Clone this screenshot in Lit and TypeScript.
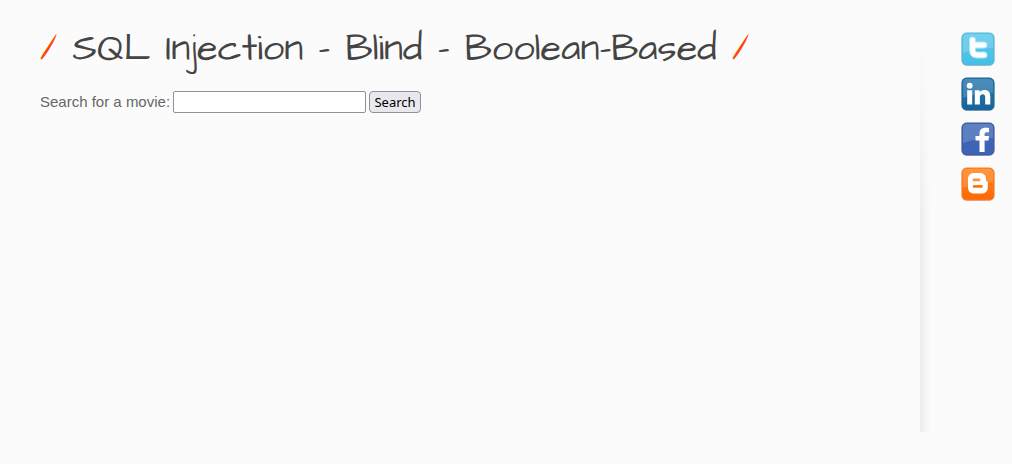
import { LitElement, html, css, svg } from "lit";
import { customElement } from "lit/decorators.js";

const tile = (id: string, top: string, bottom: string, edge: string, glyph: unknown) => svg`
  <svg viewBox="0 0 34 34" width="34" height="34" aria-hidden="true">
    <defs>
      <linearGradient id=${id} x1="0" y1="0" x2="0" y2="1">
        <stop offset="0" stop-color=${top} />
        <stop offset="1" stop-color=${bottom} />
      </linearGradient>
    </defs>
    <rect x="0.5" y="1" width="33" height="33" rx="5" fill="#000" opacity="0.18" />
    <rect x="1" y="1" width="32" height="32" rx="4.5" fill="url(#${id})" stroke=${edge} />
    <path d="M2 6a4 4 0 0 1 4-4h22a4 4 0 0 1 4 4v10Q17 16 2 21z" fill="#fff" opacity="0.16" />
    ${glyph}
  </svg>`;

const birdLetter = "M11.500 8v10q0 5 5 5h6.500M12 13h11";

const links = [
  {
    name: "Twitter",
    icon: tile("tw", "#5cc8ea", "#45bfe6", "#58b4d4", svg`
      <path d=${birdLetter} fill="none" stroke="#a9e5f7" stroke-width="7" stroke-linecap="round" stroke-linejoin="round" />
      <path d=${birdLetter} fill="none" stroke="#fff" stroke-width="5" stroke-linecap="round" stroke-linejoin="round" />
      <path d="M15.500 17.900h8" fill="none" stroke="#4fc3e8" stroke-width="1.600" stroke-linecap="round" />`),
  },
  {
    name: "LinkedIn",
    icon: tile("li", "#2779ae", "#16639b", "#1c659a", svg`
      <circle cx="8.700" cy="8.700" r="2.900" fill="#fff" />
      <path d="M6.200 13.300h5V27.500h-5zM13.800 13.300h4.800v2c1.100-1.600 2.700-2.400 4.900-2.400 4 0 5.800 2.500 5.800 6.600v8h-5.100v-7.200c0-2-.8-3.100-2.400-3.100-1.800 0-2.900 1.100-2.900 3.100v7.200h-5.100z" fill="#fff" />`),
  },
  {
    name: "Facebook",
    icon: tile("fb", "#4069b5", "#3e62b5", "#3b559b", svg`
      <path d="M18.500 30V18.500h-4V14h4v-2.300c0-4 2.200-6 6-6 1.300 0 2.400.1 3.500.3v4.300h-2.200c-1.800 0-2.200.7-2.200 2V14h4.400l-.5 4.500h-3.900V30z" fill="#fff" />`),
  },
  {
    name: "Blogger",
    icon: tile("bl", "#ff8420", "#fd6805", "#fb7c22", svg`
      <path fill-rule="evenodd" d="M13 6h6c3.700 0 6 2.500 6 6 0 1.500.3 2.200 1 2.400.5.200.8.700.8 1.400v4.700c0 3.700-2.500 6-6 6H13c-3.500 0-6-2.300-6-6V12c0-3.500 2.500-6 6-6zM13 11.500q-1.400.2-1.400 1.400T13 14.300h5q1.400-.2 1.400-1.400T18 11.500zM13 18q-1.400.2-1.400 1.400T13 20.800h7.500q1.400-.2 1.400-1.400T20.500 18z" fill="#fff" />`),
  },
];

@customElement("app-root")
export class AppRoot extends LitElement {
  static styles = css`
    :host {
      display: block;
      min-height: 100vh;
      box-sizing: border-box;
      padding: 30px 0 32px;
      background: #fbfbfb;
      color: #666;
      font: 15px/20px "Liberation Sans", Arial, sans-serif;
    }
    .page {
      display: flex;
      min-height: calc(100vh - 62px);
    }
    .main {
      flex: 1;
      padding: 0 40px;
    }
    .title {
      margin: 0;
      color: #444;
      font: 400 38px/38px "Architects Daughter", "Open Sans", sans-serif;
      white-space: nowrap;
    }
    .title::before {
      content: "/ ";
      color: #ff4500;
    }
    .title::after {
      content: " /";
      color: #ff4500;
    }
    .search {
      display: flex;
      align-items: center;
      gap: 3px;
      margin-top: 23px;
    }
    .field {
      box-sizing: border-box;
      width: 193px;
      height: 22px;
      padding: 1px 2px;
      border: 1px solid #8f8f9d;
      border-radius: 2px;
      background: #fff;
      font: 13px "Noto Sans", sans-serif;
    }
    .button {
      box-sizing: border-box;
      width: 52px;
      height: 22px;
      padding: 0;
      border: 1px solid #8f8f9d;
      border-radius: 4px;
      background: #e9e9ed;
      color: #000;
      font: 13px/20px "Noto Sans", sans-serif;
    }
    .side {
      flex: none;
      width: 92px;
      box-sizing: border-box;
      padding: 2px 17px 0 0;
      display: flex;
      flex-direction: column;
      align-items: flex-end;
      gap: 11px;
      background: linear-gradient(#fbfbfb, rgba(251, 251, 251, 0) 50%),
        linear-gradient(90deg, #ececec, #fbfbfb 10px);
    }
    .link,
    .link svg {
      display: block;
    }
  `;

  render() {
    return html`
      <div class="page">
        <main class="main">
          <h1 class="title">SQL Injection - Blind - Boolean-Based</h1>
          <form class="search" @submit=${(e: Event) => e.preventDefault()}>
            <label for="title">Search for a movie:</label>
            <input class="field" id="title" name="title" type="text" />
            <button class="button" type="submit">Search</button>
          </form>
        </main>
        <nav class="side" aria-label="Social links">
          ${links.map((l) => html`<a class="link" href="#" aria-label=${l.name}>${l.icon}</a>`)}
        </nav>
      </div>
    `;
  }
}
